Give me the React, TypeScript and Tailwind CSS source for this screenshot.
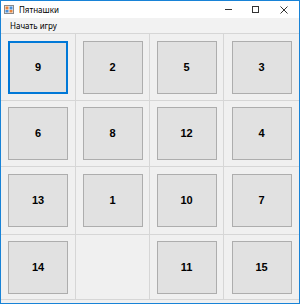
const tiles: (number | null)[] = [9, 2, 5, 3, 6, 8, 12, 4, 13, 1, 10, 7, 14, null, 11, 15]

function AppIcon() {
  return (
    <svg width="10" height="9" viewBox="0 0 10 9">
      <rect x="0.5" y="0.5" width="9" height="8" fill="#f4f4f4" stroke="#8a8a8a" />
      <rect x="1.5" y="1.5" width="3" height="3" fill="#e8833a" />
      <rect x="5.5" y="1.5" width="3" height="3" fill="#4a90d9" />
      <rect x="1.5" y="5" width="3" height="2.5" fill="#4a90d9" />
      <rect x="5.5" y="5" width="3" height="2.5" fill="#e8833a" />
    </svg>
  )
}

export default function App() {
  return (
    <div
      className="flex h-[304px] w-[300px] flex-col border border-[#1883d7] bg-[#f0f0f0]"
      style={{ fontFamily: '"Noto Sans", "Liberation Sans", sans-serif' }}
    >
      {/* title bar */}
      <div className="flex h-[17px] items-center bg-white">
        <div className="ml-[3px] flex items-center">
          <AppIcon />
        </div>
        <span className="ml-[5px] text-[8px] leading-none text-black">Пятнашки</span>
        <div className="ml-auto flex h-full items-center">
          <div className="flex h-full w-[27px] items-center justify-center">
            <div className="h-px w-[7px] bg-[#333]" />
          </div>
          <div className="flex h-full w-[27px] items-center justify-center">
            <div className="h-[7px] w-[7px] border border-[#333]" />
          </div>
          <div className="flex h-full w-[30px] items-center justify-center">
            <svg width="8" height="8" viewBox="0 0 8 8">
              <path d="M0.5 0.5 L7.5 7.5 M7.5 0.5 L0.5 7.5" stroke="#333" strokeWidth="1" />
            </svg>
          </div>
        </div>
      </div>

      {/* menu */}
      <div className="flex h-[15px] items-center bg-[#f2f2f2]">
        <span className="ml-[9px] text-[8px] leading-none text-black">Начать игру</span>
      </div>

      {/* board */}
      <div className="grid grid-cols-[74px_73px_73px_75px] grid-rows-[66px_65px_67px_64px] gap-px border-y border-[#d6d6d6] bg-[#d6d6d6]">
        {tiles.map((n, i) => (
          <div key={i} className="flex items-center justify-center bg-[#f0f0f0]">
            {n !== null && (
              <button
                className={`flex h-[53px] w-[60px] items-center justify-center bg-[#e1e1e1] text-[11px] font-bold text-black ${
                  i === 0 ? 'border-2 border-[#0078d7]' : 'border border-[#adadad]'
                }`}
                style={{ fontFamily: '"Liberation Sans", Arial, sans-serif' }}
              >
                {n}
              </button>
            )}
          </div>
        ))}
      </div>
    </div>
  )
}
